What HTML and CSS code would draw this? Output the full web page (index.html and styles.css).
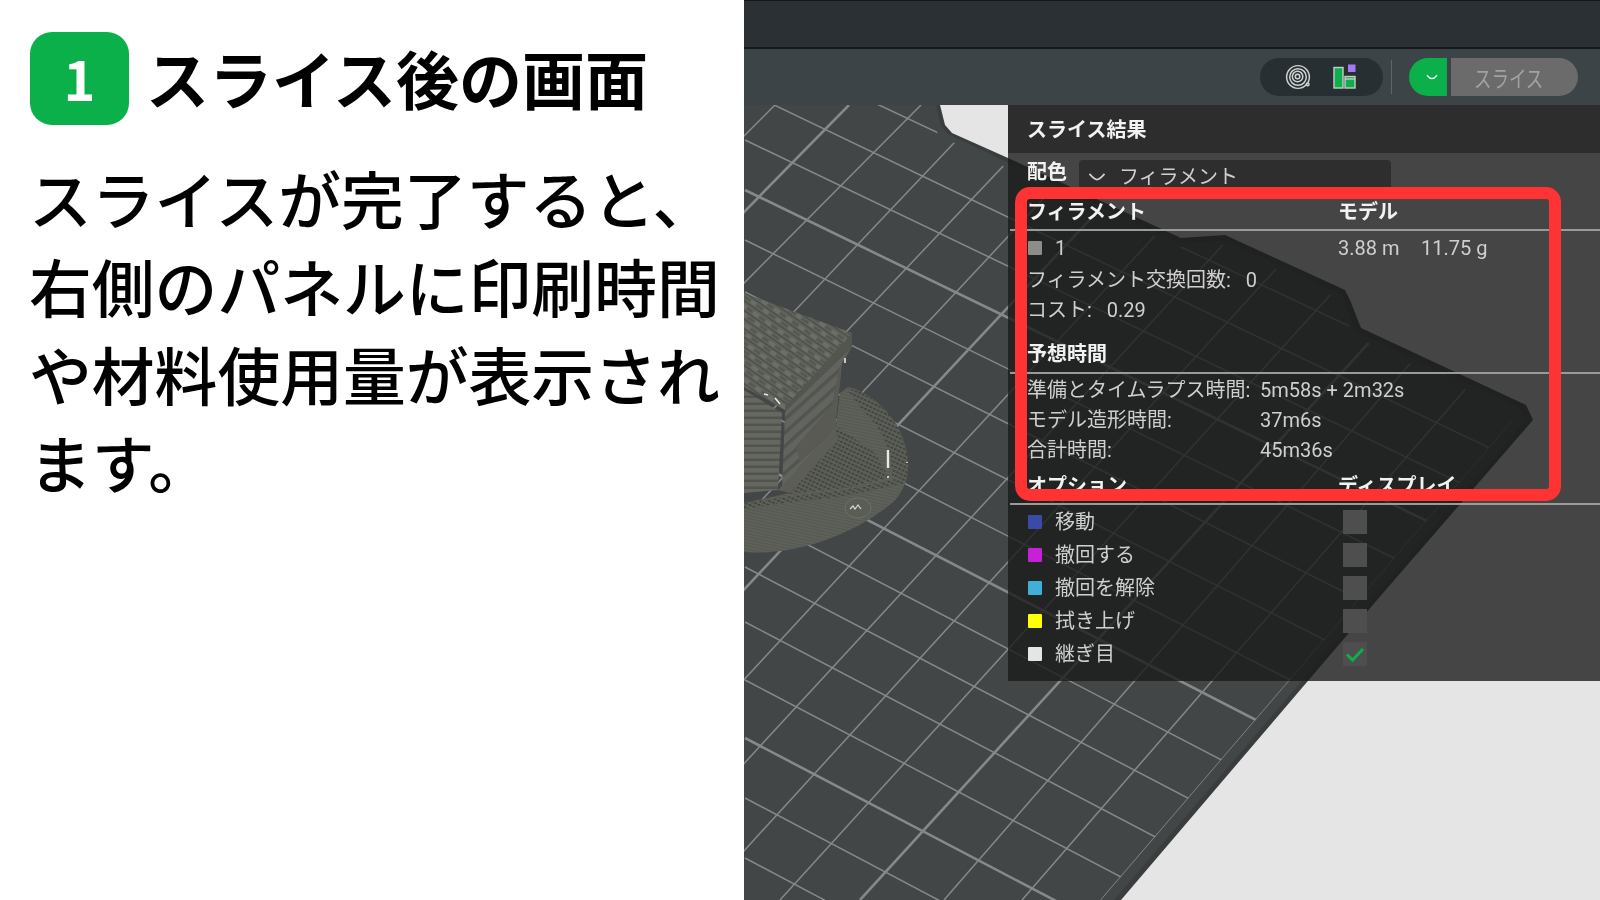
FILE: index.html
```html
<!DOCTYPE html>
<html lang="ja">
<head>
<meta charset="utf-8">
<title>スライス後の画面</title>
<link rel="stylesheet" href="styles.css">
</head>
<body>
<main class="page">
  <section class="intro">
    <header class="intro-head">
      <div class="badge">1</div>
      <h1 class="intro-title">スライス後の画面</h1>
    </header>
    <p class="intro-body">スライスが完了すると、右側のパネルに印刷時間や材料使用量が表示されます。</p>
  </section>

  <section class="app">
    <div class="topbar"></div>
    <div class="toolbar">
      <div class="view-pill">
        <svg class="icon-spiral" viewBox="0 0 32 32" aria-hidden="true">
          <g fill="none" stroke="#cfd2d2" stroke-width="1.7">
            <circle cx="16" cy="16" r="13"/>
            <circle cx="16" cy="16" r="9.5"/>
            <circle cx="15.5" cy="15.5" r="6"/>
            <circle cx="15.5" cy="15.5" r="2.6"/>
            <circle cx="27" cy="24.5" r="1.6"/>
          </g>
        </svg>
        <svg class="icon-layout" viewBox="0 0 23 25" aria-hidden="true">
          <rect x="1" y="3.5" width="9" height="20.5" fill="#0bb04a" stroke="#c9cccc" stroke-width="1.4"/>
          <rect x="12" y="12.5" width="10" height="11.5" fill="#0bb04a" stroke="#c9cccc" stroke-width="1.4"/>
          <line x1="12" y1="15" x2="22" y2="15" stroke="#c9cccc" stroke-width="1.4"/>
          <rect x="15" y="0.5" width="7.5" height="7.5" fill="#a678f2"/>
        </svg>
      </div>
      <div class="tool-divider"></div>
      <div class="slice-menu">
        <svg class="icon-chevron" viewBox="0 0 12 6" aria-hidden="true"><path d="M1 1.2 C3 3.8 4.8 4.6 6 4.6 C7.2 4.6 9 3.8 11 1.2" fill="none" stroke="#e8f7ec" stroke-width="1.4"/></svg>
      </div>
      <div class="slice-button"><span class="slice-label">スライス</span></div>
    </div>

    <div class="viewport">
      <svg class="scene" viewBox="744 105 856 795" preserveAspectRatio="none" aria-hidden="true">
        <defs>
          <clipPath id="grid-clip">
            <polygon points="744,105 930,105 938,135 1007,168 1178,247 1225,245 1338,298 1352,335 1508,410 1513,420 1101,900 744,900"/>
          </clipPath>
          <pattern id="weave" width="15" height="15" patternUnits="userSpaceOnUse" patternTransform="rotate(35)">
            <rect width="15" height="15" fill="#5f615b"/>
            <rect x="1" y="2" width="8" height="4" rx="2" fill="#6c6e68"/>
            <rect x="8" y="9" width="6" height="4" rx="2" fill="#6c6e68"/>
            <path d="M0 7.5H15M0 14.5H15M0 11H7M8 4H15" stroke="#484a43" stroke-width="1"/>
          </pattern>
          <pattern id="stripes" width="7" height="7" patternUnits="userSpaceOnUse">
            <rect width="7" height="7" fill="#656761"/>
            <rect y="3.5" width="7" height="2.5" fill="#51534c"/>
          </pattern>
          <pattern id="stripes-side" width="10" height="10" patternUnits="userSpaceOnUse" patternTransform="rotate(-42)">
            <rect width="10" height="10" fill="#626460"/>
            <rect y="5" width="10" height="3.5" fill="#52544d"/>
          </pattern>
          <pattern id="speckle" width="4" height="4" patternUnits="userSpaceOnUse" patternTransform="rotate(25)">
            <rect width="4" height="4" fill="#5c5e58"/>
            <rect width="2.6" height="1.6" fill="#3b3d38"/>
          </pattern>
          <pattern id="fine" width="3" height="3" patternUnits="userSpaceOnUse" patternTransform="rotate(12)">
            <rect width="3" height="3" fill="#5f615b"/>
            <rect width="3" height="1.2" fill="#555750"/>
          </pattern>
        </defs>

        <rect x="744" y="105" width="856" height="795" fill="#e5e5e5"/>
        <polygon points="744,105 940,105 945,125 952,133 1008,158 1181,238 1225,235 1345,290 1350,300 1361,328 1526,405 1533,420 1377,600 1307,682 1121,900 744,900" fill="#3a3d3e"/>
        <polygon points="744,105 936,105 941,126 948,134 1007,162 1179,243 1225,240 1342,294 1355,331 1520,408 1526,420 1114,900 744,900" fill="#424647"/>

        <g clip-path="url(#grid-clip)" stroke="#85898a" fill="none">
          <g stroke-width="1.5">
            <line x1="745" y1="42" x2="1600" y2="444"/>
            <line x1="745" y1="91" x2="1600" y2="501"/>
            <line x1="745" y1="140" x2="1600" y2="550"/>
            <line x1="745" y1="240" x2="1600" y2="659"/>
            <line x1="745" y1="292" x2="1600" y2="720"/>
            <line x1="745" y1="347" x2="1600" y2="779"/>
            <line x1="745" y1="402" x2="1600" y2="838"/>
            <line x1="745" y1="512" x2="1600" y2="957"/>
            <line x1="745" y1="567" x2="1600" y2="1013"/>
            <line x1="745" y1="622" x2="1600" y2="1070"/>
            <line x1="745" y1="680" x2="1600" y2="1128"/>
            <line x1="745" y1="798" x2="1600" y2="1249"/>
            <line x1="745" y1="858" x2="1600" y2="1311"/>
            <line x1="1784" y1="105" x2="1101" y2="900"/>
            <line x1="1712" y1="105" x2="1022" y2="900"/>
            <line x1="1635" y1="105" x2="944" y2="900"/>
            <line x1="1503" y1="105" x2="780" y2="900"/>
            <line x1="1426" y1="105" x2="699" y2="900"/>
            <line x1="1352" y1="105" x2="618" y2="900"/>
            <line x1="1276" y1="105" x2="540" y2="900"/>
            <line x1="1131" y1="105" x2="388" y2="900"/>
            <line x1="1061" y1="105" x2="308" y2="900"/>
            <line x1="990" y1="105" x2="236" y2="900"/>
            <line x1="921" y1="105" x2="131" y2="900"/>
            <line x1="775" y1="105" x2="-20" y2="900"/>
          </g>
          <g stroke-width="2.6">
            <line x1="745" y1="190" x2="1600" y2="605"/>
            <line x1="745" y1="457" x2="1600" y2="897"/>
            <line x1="745" y1="738" x2="1600" y2="1186"/>
            <line x1="1586" y1="105" x2="860" y2="900"/>
            <line x1="1197" y1="105" x2="454" y2="900"/>
            <line x1="849" y1="105" x2="69" y2="900"/>
          </g>
        </g>

        <g class="boat">
          <path d="M744 552 C790 556 850 538 892 503 C912 486 912 452 896 424 C882 402 862 390 848 387 L840 393 L836 425 L790 493 L744 503 Z" fill="url(#fine)"/>
          <path d="M846 388 C862 390 882 402 896 424 C910 450 910 470 906 480 L892 476 C892 450 880 425 862 410 Z" fill="url(#speckle)"/>
          <polygon points="790,494 838,427 875,453 889,478 845,488" fill="url(#speckle)"/>
          <polygon points="744,293 852,333 852,347 785,410 744,387" fill="url(#weave)"/>
          <polygon points="852,333 852,347 786,412 785,407" fill="#53554f"/>
          <polygon points="744,390 782,413 778,490 744,493" fill="url(#stripes)"/>
          <polygon points="785,412 852,347 842,363 835,427 782,490" fill="url(#stripes-side)"/>
          <polygon points="796,446 800,462 835,427 842,363 838,372 832,405" fill="#585a53"/>
          <polygon points="778,490 835,427 838,440 790,493" fill="#5b5d56"/>
          <path d="M744 503 L785 497 L845 490 L906 477 L906 483 L845 496 L785 503 L744 509 Z" fill="url(#speckle)"/>
          <ellipse cx="858" cy="508" rx="13" ry="10" fill="#5a5c56" stroke="#6c6e68"/>
          <path d="M850 509l3-3 2 3 3-4 3 4" fill="none" stroke="#d9d9d6" stroke-width="1.2"/>
          <path d="M888 450V468" stroke="#e8e8e6" stroke-width="2.4"/>
          <path d="M888 476v2M907 462v1M764 394l4 1M775 398l5 6M845 358v5" stroke="#e8e8e6" stroke-width="1.6"/>
        </g>
      </svg>

      <aside class="panel">
        <div class="panel-title">スライス結果</div>
        <div class="color-row">
          <span class="strong color-label">配色</span>
          <div class="combo">
            <svg class="combo-chevron" viewBox="0 0 14 8" aria-hidden="true"><path d="M1 1.5 C4 5 5.5 6 7 6 C8.5 6 10 5 13 1.5" fill="none" stroke="#d0d0d0" stroke-width="1.4"/></svg>
            <span>フィラメント</span>
          </div>
        </div>

        <div class="table-head head-filament strong"><span class="col-name">フィラメント</span><span>モデル</span></div>
        <div class="line line-filament">
          <span class="swatch swatch-grey"></span><span class="col-id">1</span><span class="col-used">3.88 m</span><span>11.75 g</span>
        </div>
        <div class="line">フィラメント交換回数:<span class="inline-value">0</span></div>
        <div class="line">コスト:<span class="inline-value">0.29</span></div>

        <div class="table-head head-time strong"><span>予想時間</span></div>
        <div class="line line-first"><span class="col-key">準備とタイムラプス時間:</span><span>5m58s + 2m32s</span></div>
        <div class="line"><span class="col-key">モデル造形時間:</span><span>37m6s</span></div>
        <div class="line"><span class="col-key">合計時間:</span><span>45m36s</span></div>

        <div class="table-head head-option strong"><span class="col-name">オプション</span><span>ディスプレイ</span></div>
        <div class="legend"><span class="swatch swatch-move"></span><span class="legend-name">移動</span><span class="check"></span></div>
        <div class="legend"><span class="swatch swatch-retract"></span><span class="legend-name">撤回する</span><span class="check"></span></div>
        <div class="legend"><span class="swatch swatch-unretract"></span><span class="legend-name">撤回を解除</span><span class="check"></span></div>
        <div class="legend"><span class="swatch swatch-wipe"></span><span class="legend-name">拭き上げ</span><span class="check"></span></div>
        <div class="legend"><span class="swatch swatch-seam"></span><span class="legend-name">継ぎ目</span><span class="check"><svg viewBox="0 0 24 24" aria-hidden="true"><path d="M4 12.5L9.5 18L20 7" fill="none" stroke="#0bb04a" stroke-width="3"/></svg></span></div>
      </aside>

      <div class="highlight"></div>
    </div>
  </section>
</main>
</body>
</html>
```

FILE: styles.css
```css
* { box-sizing: border-box; }

html, body {
  margin: 0;
  padding: 0;
  background: #fff;
}

body {
  font-family: "Noto Sans CJK JP", "Noto Sans", sans-serif;
  color: #000;
}

.page {
  display: flex;
  width: 1600px;
  height: 900px;
  overflow: hidden;
}

/* Left explanation column */
.intro {
  width: 744px;
  flex: none;
  padding: 32px 0 0 30px;
  background: #fff;
}

.intro-head {
  display: flex;
  align-items: center;
  gap: 17px;
  height: 93px;
}

.badge {
  width: 99px;
  height: 93px;
  flex: none;
  display: flex;
  align-items: center;
  justify-content: center;
  padding-bottom: 2px;
  border-radius: 22px;
  background: #0bb04a;
  color: #fff;
  font-size: 54px;
  font-weight: 700;
  line-height: 1;
}

.intro-title {
  margin: 0;
  padding-bottom: 4px;
  font-size: 63px;
  font-weight: 700;
  line-height: 89px;
  white-space: nowrap;
}

.intro-body {
  width: 705px;
  margin: 28px 0 0 -1px;
  font-size: 62.8px;
  font-weight: 500;
  line-height: 88px;
}

/* Right application screenshot */
.app {
  flex: 1;
  min-width: 0;
  display: flex;
  flex-direction: column;
  font-family: Roboto, "Noto Sans CJK JP", sans-serif;
}

.topbar {
  height: 49px;
  flex: none;
  background: #2a3033;
  border-top: 1px solid #14181a;
  border-bottom: 2px solid #15191b;
}

.toolbar {
  height: 56px;
  flex: none;
  display: flex;
  align-items: center;
  justify-content: flex-end;
  padding-right: 22px;
  background: #3c4447;
}

.view-pill {
  width: 123px;
  height: 38px;
  display: flex;
  align-items: center;
  padding-left: 24px;
  gap: 21px;
  border-radius: 19px;
  background: #282f32;
}

.icon-spiral { width: 28px; height: 28px; display: block; }
.icon-layout { width: 23px; height: 25px; display: block; margin-top: -1px; }

.tool-divider {
  width: 1px;
  height: 34px;
  margin: 0 17px 0 8px;
  background: #5e6669;
}

.slice-menu {
  width: 38px;
  height: 38px;
  display: flex;
  align-items: center;
  justify-content: center;
  padding-left: 7px;
  border-radius: 19px 0 0 19px;
  background: #0bb04a;
}

.icon-chevron { width: 12px; height: 6px; display: block; }

.slice-button {
  width: 127px;
  height: 38px;
  margin-left: 4px;
  display: flex;
  align-items: center;
  justify-content: center;
  padding-right: 12px;
  border-radius: 0 19px 19px 0;
  background: #6b6b6b;
  color: #a2a2a2;
  font-size: 23px;
}

.slice-label {
  display: block;
  transform: scaleX(0.76);
  white-space: nowrap;
}

.viewport {
  position: relative;
  flex: 1;
  min-height: 0;
}

.scene {
  position: absolute;
  inset: 0;
  width: 100%;
  height: 100%;
  display: block;
  filter: blur(0.5px);
}

.panel {
  position: absolute;
  top: 0;
  left: 264px;
  right: 0;
  height: 576px;
  padding-left: 2px;
  background: rgba(25, 25, 25, 0.79);
  color: #cfcfcf;
  font-size: 20px;
  line-height: 30px;
  filter: blur(0.45px);
}

.strong {
  color: #f2f2f2;
  font-weight: 700;
}

.panel-title {
  height: 48px;
  margin-left: -2px;
  padding-left: 19px;
  background: #2d2d2d;
  color: #f2f2f2;
  font-weight: 700;
  line-height: 50px;
}

.color-row {
  display: flex;
  align-items: flex-start;
  height: 41px;
  padding: 7px 0 0 17px;
}

.color-label {
  width: 52px;
  line-height: 24px;
}

.combo {
  width: 312px;
  height: 34px;
  display: flex;
  align-items: center;
  gap: 13px;
  padding-left: 9px;
  border-radius: 4px;
  background: #2e2e2e;
  line-height: 34px;
}

.combo-chevron { width: 18px; height: 10px; display: block; }

.table-head {
  display: flex;
  align-items: center;
  padding-left: 17px;
  border-bottom: 2px solid #9a9a9a;
}

.head-filament { height: 37px; }
.head-time { height: 40px; margin-top: 9px; padding-top: 2px; }
.head-option { height: 40px; padding-top: 3px; }

.col-name { width: 311px; flex: none; }

.line {
  display: flex;
  align-items: center;
  height: 30px;
  padding-left: 17px;
  white-space: nowrap;
}

.line-filament { height: 34px; }
.line-first { margin-top: 1px; }

.col-id { width: 283px; flex: none; }
.col-used { width: 83px; flex: none; }
.col-key { width: 233px; flex: none; }

.inline-value { margin-left: 15px; }

.swatch {
  width: 14px;
  height: 14px;
  flex: none;
  margin-left: 1px;
  margin-right: 13px;
  border-radius: 1px;
}

.swatch-grey { background: #8d8d88; }
.swatch-move { background: #3a4aa8; }
.swatch-retract { background: #c81fd8; }
.swatch-unretract { background: #3fb0d8; }
.swatch-wipe { background: #ffff00; }
.swatch-seam { background: #e5e5e5; }

.legend {
  display: flex;
  align-items: center;
  height: 33px;
  padding-left: 17px;
}

.legend-name { width: 288px; flex: none; }

.check {
  width: 24px;
  height: 24px;
  flex: none;
  display: block;
  background: #4e4e4e;
}

.check svg { width: 24px; height: 24px; display: block; }

.highlight {
  position: absolute;
  top: 82px;
  left: 271px;
  width: 546px;
  height: 314px;
  border: 12px solid #ff3333;
  border-radius: 15px;
}
```
